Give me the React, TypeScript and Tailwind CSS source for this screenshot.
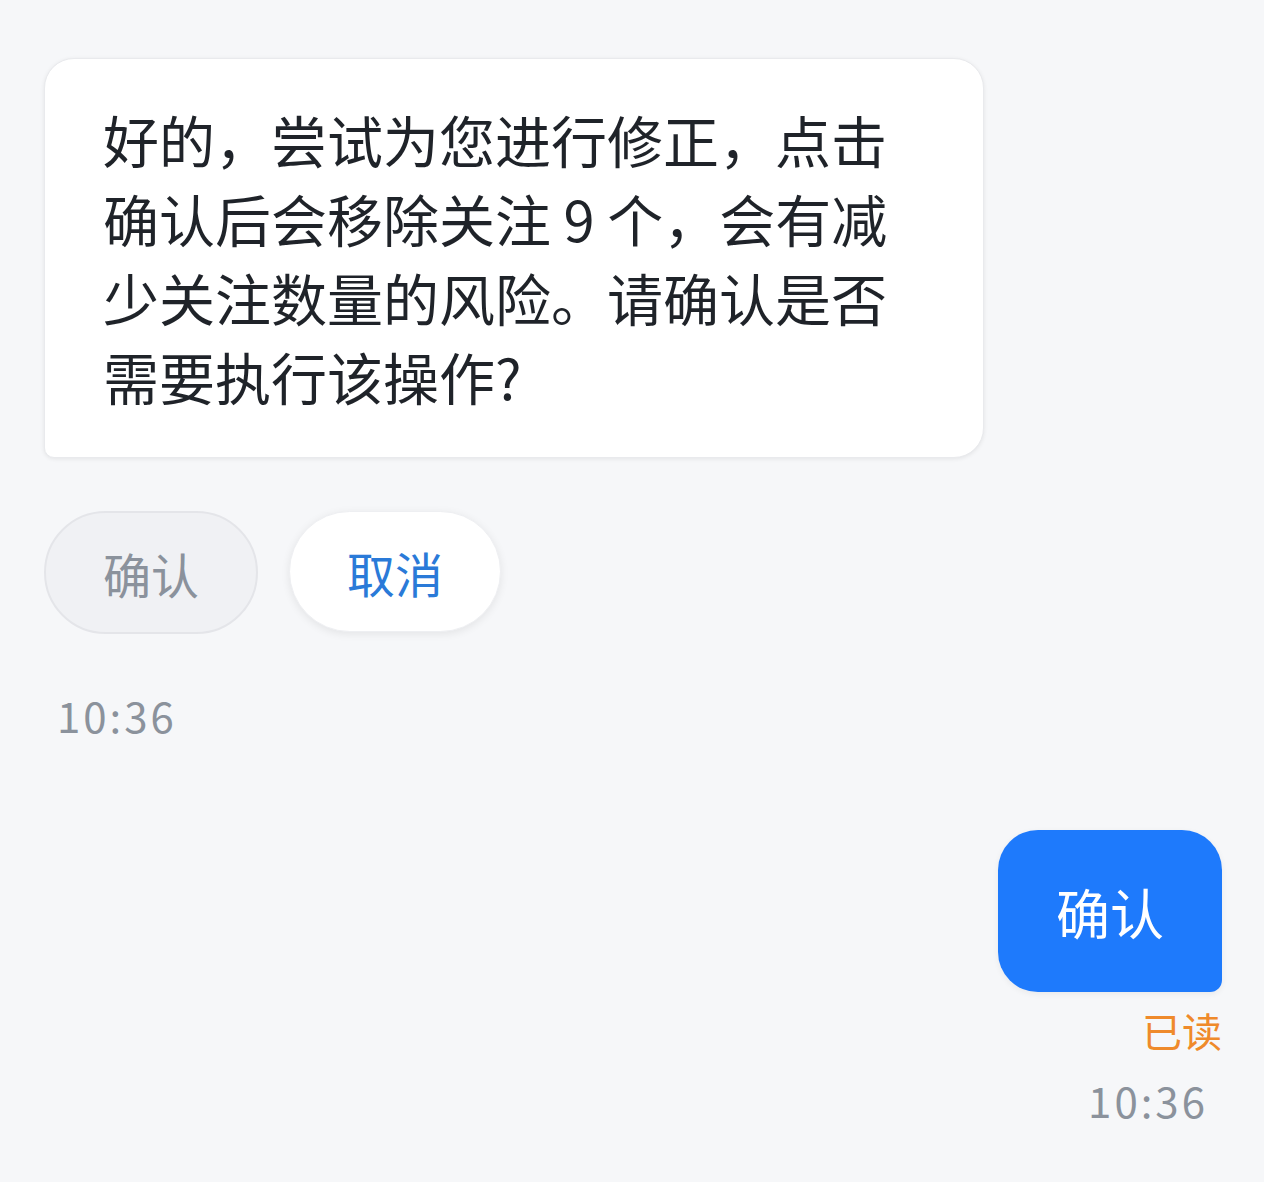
import React from 'react'

const font = { fontFamily: '"Noto Sans CJK SC", "Noto Sans", sans-serif' }

const lines = [
  '好的，尝试为您进行修正，点击',
  '确认后会移除关注 9 个，会有减',
  '少关注数量的风险。请确认是否',
  '需要执行该操作?',
]

export default function App() {
  return (
    <div className="min-h-[1182px] w-full bg-[#f6f7f9] px-[44px] pt-[58px]" style={font}>
      {/* assistant message */}
      <div className="w-[940px] rounded-tl-[30px] rounded-tr-[30px] rounded-br-[30px] rounded-bl-[10px] bg-white pl-[58px] pt-[40px] pb-[42px] shadow-[0_1px_4px_rgba(0,0,0,0.08)] border border-[#e9eaed]">
        {lines.map((l) => (
          <div key={l} className="whitespace-pre text-[56px] leading-[79px] text-[#1f2329]">
            {l}
          </div>
        ))}
      </div>

      <div className="mt-[53px] flex gap-[31px]">
        <button className="flex h-[123px] w-[214px] items-center justify-center rounded-full border-2 border-[#e4e5e9] bg-[#f0f1f4] text-[48px] text-[#8b929c]">
          确认
        </button>
        <button className="flex h-[121px] w-[212px] items-center justify-center rounded-full bg-white text-[48px] text-[#2a7ad8] shadow-[0_2px_8px_rgba(0,0,0,0.08)] border border-[#eeeff2]">
          取消
        </button>
      </div>

      <div className="mt-[54px] pl-[13px] text-[42px] leading-[54px] tracking-[3px] text-[#8b929c]">10:36</div>

      {/* user message */}
      <div className="mt-[88px] flex flex-col items-end">
        <div className="mr-[-2px] flex h-[162px] w-[224px] items-center justify-center rounded-tl-[40px] rounded-tr-[40px] rounded-bl-[40px] rounded-br-[12px] bg-[#1e7afc] text-[54px] text-white shadow-[0_2px_6px_rgba(0,0,0,0.06)]">
          确认
        </div>
        <div className="mt-[13px] mr-[-2px] text-[40px] leading-[50px] text-[#ef8a2b]">已读</div>
        <div className="mt-[18px] mr-[12px] text-[42px] leading-[54px] tracking-[3px] text-[#8b929c]">10:36</div>
      </div>
    </div>
  )
}
